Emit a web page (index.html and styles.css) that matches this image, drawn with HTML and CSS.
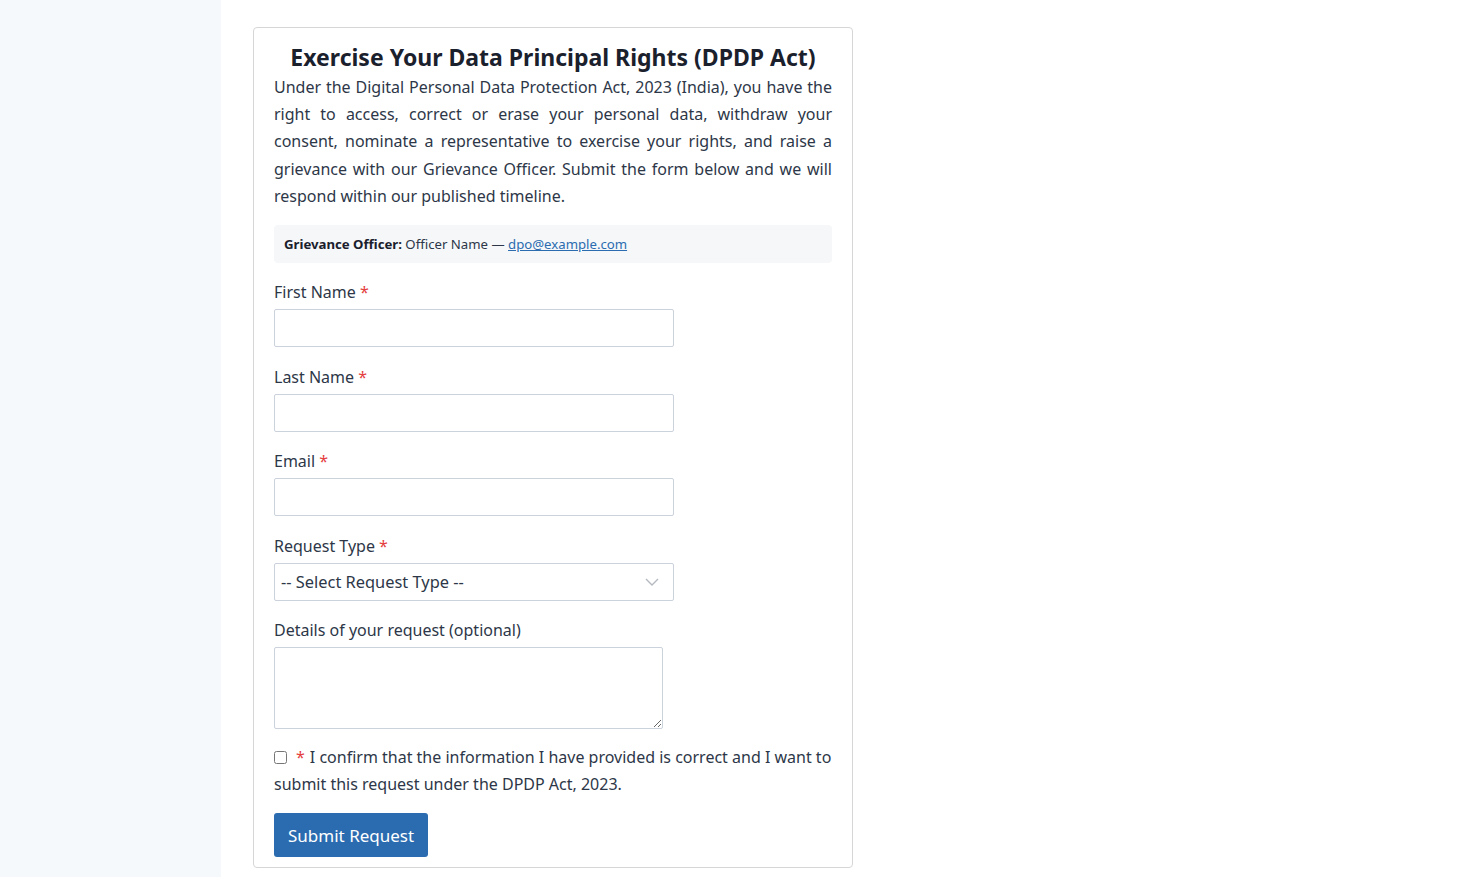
FILE: index.html
```html
<!DOCTYPE html>
<html lang="en">
<head>
<meta charset="utf-8">
<title>DPDP Rights</title>
<link rel="stylesheet" href="styles.css">
</head>
<body>
<div class="layout">
  <aside class="sidebar"></aside>
  <main class="main">
    <div class="card">
      <h2 class="title">Exercise Your Data Principal Rights (DPDP Act)</h2>
      <p class="intro">Under the Digital Personal Data Protection Act, 2023 (India), you have the right to access, correct or erase your personal data, withdraw your consent, nominate a representative to exercise your rights, and raise a grievance with our Grievance Officer. Submit the form below and we will respond within our published timeline.</p>
      <div class="officer"><strong>Grievance Officer:</strong> Officer Name — <a href="#">dpo@example.com</a></div>
      <form class="form">
        <div class="group">
          <label class="label">First Name <span class="req">*</span></label>
          <input class="input" type="text">
        </div>
        <div class="group">
          <label class="label">Last Name <span class="req">*</span></label>
          <input class="input" type="text">
        </div>
        <div class="group">
          <label class="label">Email <span class="req">*</span></label>
          <input class="input" type="email">
        </div>
        <div class="group">
          <label class="label">Request Type <span class="req">*</span></label>
          <div class="select">
            <span>-- Select Request Type --</span>
            <svg class="chev" width="14" height="8" viewBox="0 0 14 8"><path d="M1 1l6 6 6-6" fill="none" stroke="#b4b9bf" stroke-width="1.4"/></svg>
          </div>
        </div>
        <div class="group group-last">
          <label class="label">Details of your request (optional)</label>
          <textarea class="textarea"></textarea>
        </div>
        <div class="confirm"><input type="checkbox" class="check"><span class="req star">*</span><span class="confirm-text">I confirm that the information I have provided is correct and I want to submit this request under the DPDP Act, 2023.</span></div>
        <button type="button" class="btn">Submit Request</button>
      </form>
    </div>
  </main>
</div>
</body>
</html>
```
FILE: styles.css
```css
* { box-sizing: border-box; }
html, body { margin: 0; padding: 0; height: 100%; }
body {
  font-family: "Noto Sans", "Open Sans", sans-serif;
  color: #2d3748;
  background: #fff;
}
.layout { display: flex; min-height: 877px; }
.sidebar { width: 221px; flex: none; background: #f5f9fc; }
.main { flex: 1; padding: 27px 32px 0; }
.card {
  width: 600px;
  border: 1px solid #d6d6d6;
  border-radius: 4px;
  padding: 13px 20px 10px;
}
.title {
  margin: 0;
  text-align: center;
  font-size: 23px;
  font-weight: 700;
  color: #1a202c;
  line-height: 33px;
}
.intro {
  margin: 0 0 15px;
  text-align: justify;
  font-size: 16px;
  line-height: 27.2px;
}
.officer {
  background: #f5f7f9;
  border-radius: 4px;
  padding: 9px 10px;
  font-size: 13.2px;
  line-height: 20px;
}
.officer strong { color: #1a202c; }
.officer a { color: #2b6cb0; }
.form { margin-top: 17px; }
.group { margin-bottom: 17.5px; }
.group-last { margin-bottom: 15px; }
.label { display: block; font-size: 16px; line-height: 24px; margin-bottom: 5px; }
.req { color: #e53e3e; }
.input, .select {
  display: block;
  width: 400px;
  height: 38px;
  border: 1px solid #cbd2dc;
  border-radius: 2px;
  background: #fff;
  font-family: inherit;
  font-size: 16px;
}
.select {
  display: flex;
  align-items: center;
  justify-content: space-between;
  padding: 0 14px 0 6px;
  font-size: 16.4px;
}
.textarea {
  display: block;
  width: 389px;
  height: 82px;
  border: 1px solid #cbd2dc;
  border-radius: 2px;
  font-family: inherit;
}
.confirm { font-size: 16px; line-height: 27px; }
.check { width: 13px; height: 13px; margin: 0 9px 0 0; vertical-align: -1px; }
.star { margin-right: 5px; }
.btn {
  display: block;
  margin-top: 15px;
  background: #2b6cb0;
  color: #fff;
  border: 0;
  border-radius: 3px;
  font-family: inherit;
  font-size: 17px;
  padding: 0 14px;
  height: 44px;
}
```
